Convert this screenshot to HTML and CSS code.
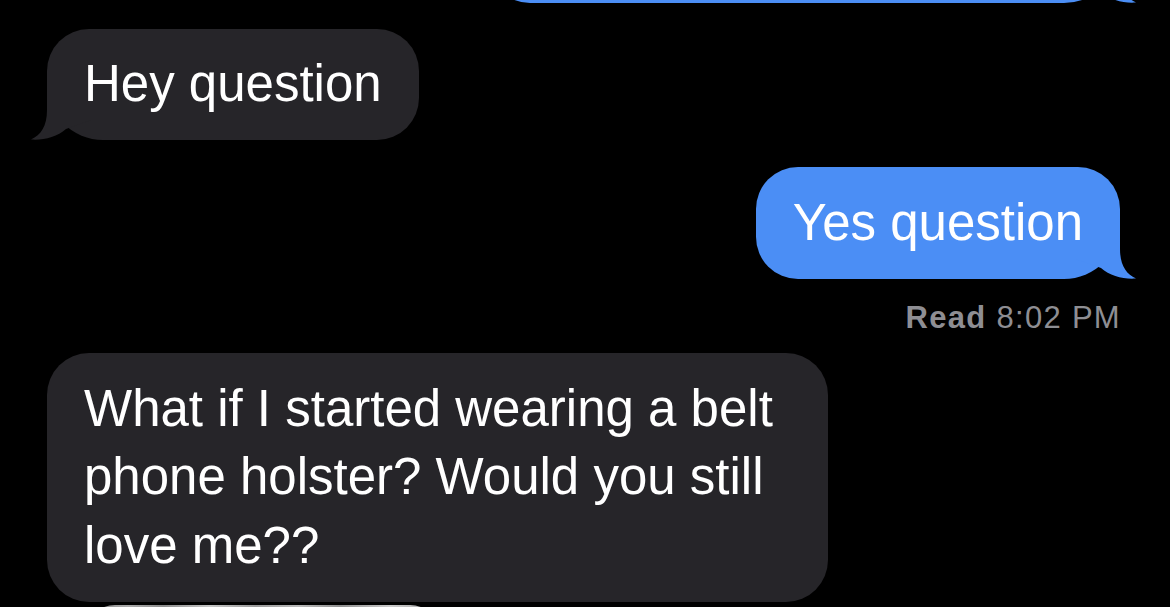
FILE: index.html
```html
<!DOCTYPE html>
<html lang="en">
<head>
<meta charset="utf-8">
<title>Messages</title>
<link rel="stylesheet" href="styles.css">
</head>
<body>
<div class="thread">
  <div class="bubble out tailed stub">
    <svg class="tail" viewBox="0 0 60 60" aria-hidden="true"><path d="M16 0 L16 30 C16 46 10 55 0 59.5 C12 60.5 26 57 35 49 L60 40 L60 0 Z"/></svg>
  </div>
  <div class="bubble in tailed hey"><span class="txt">Hey question</span>
    <svg class="tail" viewBox="0 0 60 60" aria-hidden="true"><path d="M16 0 L16 30 C16 46 10 55 0 59.5 C12 60.5 26 57 35 49 L60 40 L60 0 Z"/></svg>
  </div>
  <div class="bubble out tailed yes"><span class="txt">Yes question</span>
    <svg class="tail" viewBox="0 0 60 60" aria-hidden="true"><path d="M16 0 L16 30 C16 46 10 55 0 59.5 C12 60.5 26 57 35 49 L60 40 L60 0 Z"/></svg>
  </div>
  <div class="receipt"><b>Read</b> 8:02 PM</div>
  <div class="bubble in wide"><span class="txt">What if I started wearing a belt phone holster? Would you still love me??</span></div>
  <div class="photo"></div>
</div>
</body>
</html>
```

FILE: styles.css
```css
html, body {
  margin: 0;
  background: #000;
}

body {
  font-family: "Liberation Sans", Arial, sans-serif;
  overflow: hidden;
}

.thread {
  display: flex;
  flex-direction: column;
  height: 607px;
  overflow: hidden;
}

.bubble {
  position: relative;
  flex-shrink: 0;
  box-sizing: border-box;
  padding: 21.5px 37px;
  font-size: 51px;
  line-height: 68.5px;
  color: #fff;
  border-radius: 42px;
}

.txt {
  position: relative;
  z-index: 1;
}

.in {
  align-self: flex-start;
  margin-left: 47px;
  background: #262529;
}

.out {
  align-self: flex-end;
  margin-right: 50px;
  background: #4b8ef5;
}

.in.tailed {
  border-bottom-left-radius: 56px;
}

.out.tailed {
  border-bottom-right-radius: 56px;
}

.tail {
  position: absolute;
  bottom: 0;
  width: 60px;
  height: 60px;
}

.in .tail {
  left: -16px;
  fill: #262529;
}

.out .tail {
  right: -16px;
  transform: scaleX(-1);
  fill: #4b8ef5;
}

.stub {
  width: 632px;
  height: 111.5px;
  margin-top: -109px;
}

.hey {
  margin-top: 26px;
}

.yes {
  margin-top: 27px;
}

.receipt {
  flex-shrink: 0;
  align-self: flex-end;
  margin: 20.7px 49px 0 0;
  font-size: 31px;
  line-height: 37px;
  letter-spacing: 1.3px;
  color: #8e8e93;
}

.receipt b {
  font-weight: 700;
}

.wide {
  width: 781px;
  margin-top: 17px;
}

.photo {
  flex-shrink: 0;
  width: 355px;
  height: 60px;
  margin: 3px 0 0 85px;
  border-radius: 30px 30px 0 0;
  background: linear-gradient(90deg, #7d7d7d 0%, #a9a9a9 12%, #8c8c8c 22%, #c4c4c4 35%, #9a9a9a 48%, #b8b8b8 60%, #8f8f8f 72%, #c9c9c9 86%, #a0a0a0 100%);
}
```
